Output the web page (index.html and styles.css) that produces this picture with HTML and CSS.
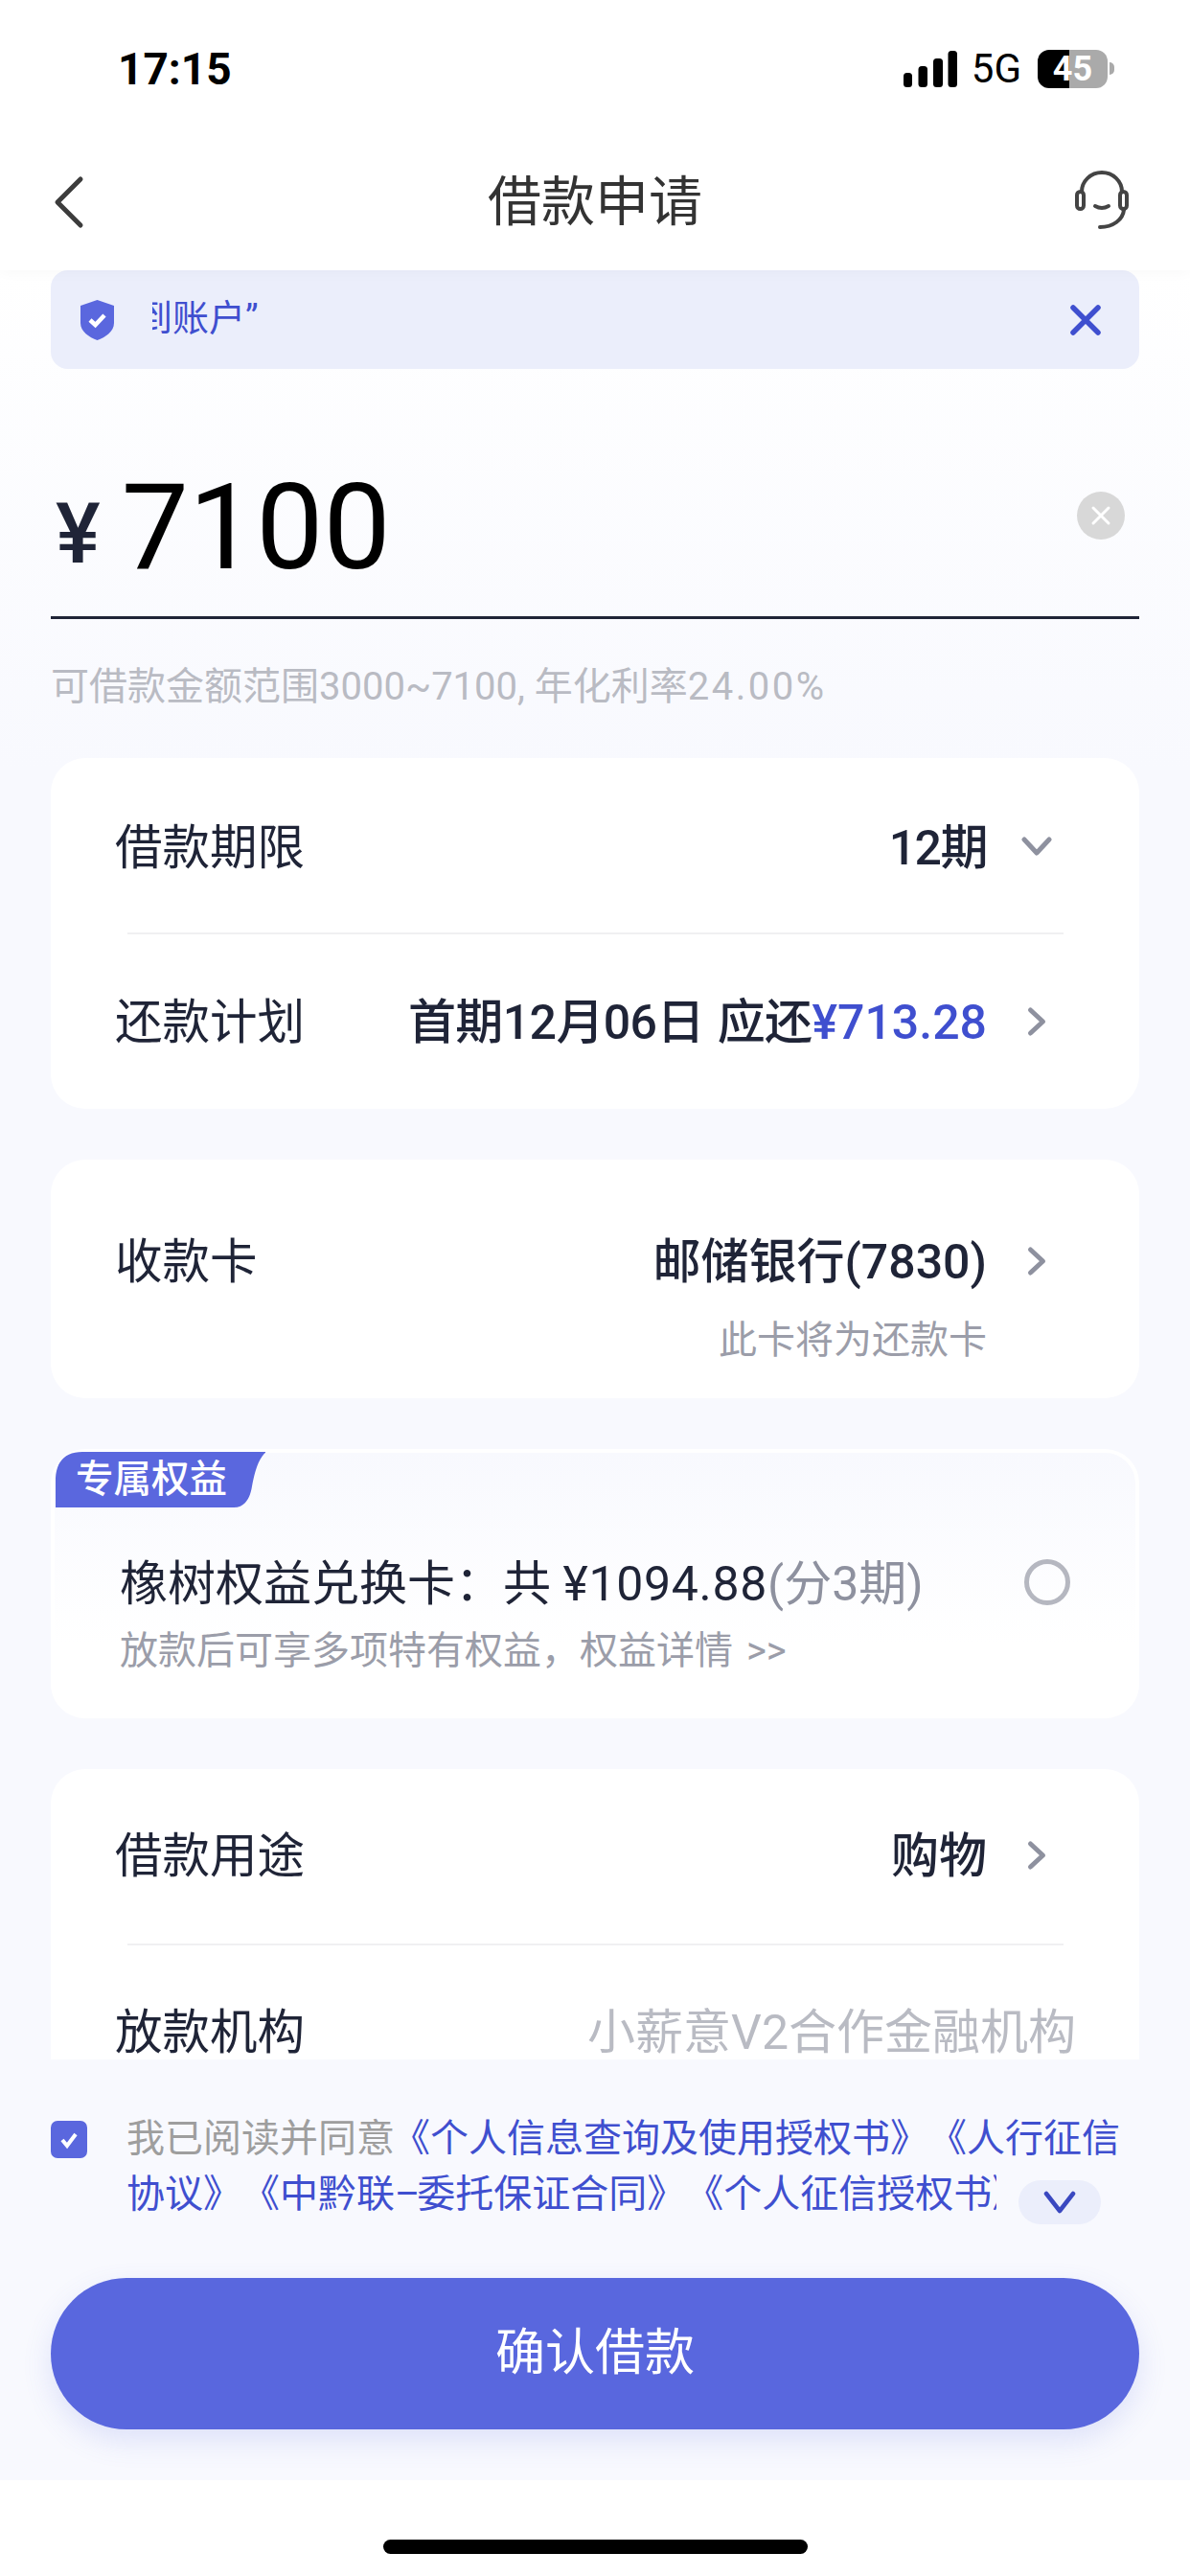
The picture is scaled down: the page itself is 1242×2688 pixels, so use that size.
FILE: index.html
```html
<!DOCTYPE html>
<html lang="zh-CN">
<head>
<meta charset="utf-8">
<title>借款申请</title>
<link rel="stylesheet" href="styles.css">
</head>
<body>
<div class="page">
  <header class="top">
    <div class="status">
      <span class="time">17:15</span>
      <div class="status-right">
        <svg class="signal" width="56" height="38" viewBox="0 0 56 38"><rect x="0" y="23" width="9" height="15" rx="3.5"/><rect x="15.500" y="16" width="9.500" height="22" rx="3.500"/><rect x="31" y="8" width="10" height="30" rx="3.500"/><rect x="46.500" y="0" width="9.500" height="38" rx="3.500"/></svg>
        <span class="net">5G</span>
        <span class="battery">45</span>
        <span class="nub"></span>
      </div>
    </div>
    <nav class="nav">
      <div class="nav-side nav-side-left">
        <svg width="34" height="56" viewBox="0 0 34 56"><path d="M30 4 L6 28 L30 52" fill="none" stroke="#3c3c3c" stroke-width="5" stroke-linecap="round" stroke-linejoin="round"/></svg>
      </div>
      <h1 class="title">借款申请</h1>
      <div class="nav-side nav-side-right">
        <svg width="60" height="64" viewBox="0 0 60 64" fill="none" stroke="#444" stroke-width="4" stroke-linecap="round"><path d="M9 23 A21 20 0 0 1 51 23"/><rect x="4" y="23" width="7" height="18" rx="3.500"/><rect x="49" y="23" width="7" height="18" rx="3.500"/><path d="M23 38 Q30 42 37 38"/><path d="M53 42 C52 52 42 60 28 60"/></svg>
      </div>
    </nav>
  </header>

  <main class="body">
    <div class="scroll">
      <div class="notice">
        <svg class="shield" width="35" height="42" viewBox="0 0 35 42"><path d="M17.500 0 L35 6 V24 C35 33 26 39 17.500 42 C9 39 0 33 0 24 V6 Z" fill="#5a67de"/><path d="M10 21 L15.500 26 L25 16" fill="none" stroke="#fff" stroke-width="4.500"/></svg>
        <div class="notice-clip"><span class="notice-text">到账户”</span></div>
        <svg class="notice-close" width="32" height="32" viewBox="0 0 32 32"><path d="M3 3 L29 29 M29 3 L3 29" stroke="#3f4fcf" stroke-width="5.500" stroke-linecap="round"/></svg>
      </div>

      <div class="amount">
        <span class="currency">¥</span>
        <span class="figure">7100</span>
        <svg class="clear" width="50" height="50" viewBox="0 0 50 50"><circle cx="25" cy="25" r="25" fill="#d8d8d8"/><path d="M17 17 L33 33 M33 17 L17 33" stroke="#fff" stroke-width="3" stroke-linecap="round"/></svg>
      </div>
      <p class="hint">可借款金额范围3000~7100, 年化利率<span class="hint-rate">24.00%</span></p>

      <section class="card">
        <div class="row row-first">
          <span class="label">借款期限</span>
          <span class="value value-tight">12期</span>
          <span class="slot"><svg width="32" height="32" viewBox="0 0 32 32"><path d="M3 9 L16 23 L29 9" class="chev"/></svg></span>
        </div>
        <div class="rule"></div>
        <div class="row row-second">
          <span class="label">还款计划</span>
          <span class="value"><span class="value-tight-soft">首期12月06日 应还</span><em class="money">¥713.28</em></span>
          <span class="slot"><svg width="32" height="32" viewBox="0 0 32 32"><path d="M9.500 4 L22.500 16 L9.500 28" class="chev"/></svg></span>
        </div>
      </section>

      <section class="card card-payee">
        <div class="row row-short">
          <span class="label">收款卡</span>
          <span class="value">邮储银行(7830)</span>
          <span class="slot"><svg width="32" height="32" viewBox="0 0 32 32"><path d="M9.500 4 L22.500 16 L9.500 28" class="chev"/></svg></span>
        </div>
        <p class="note">此卡将为还款卡</p>
      </section>

      <section class="card card-perk">
        <span class="tag">专属权益</span>
        <div class="perk">
          <div class="perk-text">
            <p class="perk-main">橡树权益兑换卡：共 <span class="perk-amount">¥1094.88</span><span class="perk-term">(分3期)</span></p>
            <p class="perk-sub">放款后可享多项特有权益，权益详情 &gt;&gt;</p>
          </div>
          <span class="radio"></span>
        </div>
      </section>

      <section class="card">
        <div class="row">
          <span class="label">借款用途</span>
          <span class="value">购物</span>
          <span class="slot"><svg width="32" height="32" viewBox="0 0 32 32"><path d="M9.500 4 L22.500 16 L9.500 28" class="chev"/></svg></span>
        </div>
        <div class="rule"></div>
        <div class="row row-plain">
          <span class="label">放款机构</span>
          <span class="value-muted">小薪意V2合作金融机构</span>
        </div>
      </section>
    </div>

    <div class="footer">
      <div class="agree">
        <span class="check"><svg width="24" height="24" viewBox="0 0 24 24"><path d="M5 12 L10 18 L19 6" fill="none" stroke="#fff" stroke-width="4"/></svg></span>
        <div class="agree-text">
          <div class="agree-line"><span class="muted">我已阅读并同意</span><span class="link link-lead">《个人信息查询及使用授权书》《人行征信</span></div>
          <div class="agree-line">
            <span class="link agree-clip">协议》《中黔联<span class="dash">–</span>委托保证合同》《个人征信授权书》</span>
            <span class="more"><svg width="34" height="26" viewBox="0 0 34 26"><path d="M3 4 L17 22 L31 4" fill="none" stroke="#3a48c0" stroke-width="4.500" stroke-linecap="round" stroke-linejoin="round"/></svg></span>
          </div>
        </div>
      </div>
      <button class="submit">确认借款</button>
    </div>
  </main>

  <div class="home"><span class="home-bar"></span></div>
</div>
</body>
</html>
```

FILE: styles.css
```css
* { box-sizing: border-box; }
html, body { margin: 0; padding: 0; background: #fff; }
body { font-family: Roboto, "Noto Sans CJK SC", sans-serif; color: #1f2437; text-spacing-trim: space-all; }
p, h1 { margin: 0; font-weight: 400; }
em { font-style: normal; }

.page { width: 1242px; height: 2688px; display: flex; flex-direction: column; overflow: hidden; }

.top { position: relative; z-index: 2; background: #fff; box-shadow: 0 2px 14px rgba(0, 0, 0, .03); }
.status { height: 140px; display: flex; align-items: center; justify-content: space-between; padding: 3px 79px 0 123px; }
.time { font-size: 46px; font-weight: 700; color: #000; line-height: 1; }
.status-right { display: flex; align-items: center; }
.signal { fill: #000; margin-right: 15px; }
.net { font-size: 42px; line-height: 1; color: #000; margin-right: 17px; }
.battery { width: 73px; height: 40px; border-radius: 12px; background: linear-gradient(90deg, #000 45%, #aaa 45%); color: #fff; font-size: 36px; font-weight: 700; line-height: 40px; text-align: center; }
.nub { width: 5px; height: 13px; margin-left: 2px; border-radius: 0 6px 6px 0; background: #aaa; }

.nav { height: 142px; padding: 0 62px 0 54px; display: flex; align-items: center; justify-content: space-between; }
.nav-side { display: flex; }
.nav-side-left { width: 68px; }
.nav-side-right { width: 60px; justify-content: flex-end; margin-top: -5px; }
.title { font-size: 56px; line-height: 64px; color: #333; }

.body { flex: 1; min-height: 0; display: flex; flex-direction: column; background: linear-gradient(#fff, #f8f9fe 520px); }
.scroll { height: 1867px; padding: 0 53px; overflow: hidden; }

.notice { height: 103px; border-radius: 18px; background: #ebeefb; display: flex; align-items: center; padding: 0 40px 0 31px; }
.shield { flex: none; }
.notice-clip { flex: 1; margin: -3px 0 0 40px; overflow: hidden; }
.notice-text { display: block; margin-left: -17px; font-size: 38px; line-height: 44px; color: #3f4fcf; white-space: nowrap; }
.notice-close { flex: none; }

.amount { height: 261px; padding-top: 88px; display: flex; align-items: flex-start; border-bottom: 3px solid #1f2437; }
.currency { font-size: 88px; line-height: 100px; margin: 34px 0 0 5px; font-weight: 500; }
.figure { font-size: 125px; line-height: 150px; color: #000; margin: 3px 0 0 22px; }
.clear { margin: 40px 15px 0 auto; }

.hint { font-size: 40px; line-height: 44px; color: #b9bbc3; padding-top: 49px; margin-bottom: 52px; white-space: nowrap; }
.hint-rate { letter-spacing: 2.500px; }

.card { position: relative; background: #fff; border-radius: 36px; margin-bottom: 53px; }
.row { height: 182px; padding: 0 91px 0 67px; display: flex; align-items: center; }
.row-first { padding-top: 5px; }
.row-second { padding-top: 2px; }
.label { font-size: 49.500px; line-height: 60px; }
.value { margin-left: auto; font-size: 50px; line-height: 60px; font-weight: 500; white-space: nowrap; }
.value-tight { letter-spacing: -1.500px; }
.value-tight-soft { letter-spacing: -.6px; word-spacing: 2px; }
.money { color: #3f4fcf; }
.slot { width: 68px; display: flex; justify-content: flex-end; margin-top: -3px; }
.chev { fill: none; stroke: #8e919f; stroke-width: 5; stroke-linecap: round; stroke-linejoin: round; }
.rule { height: 2px; margin: 0 79px 0 80px; background: #f0f0f2; }

.card-payee { height: 249px; padding-top: 43px; }
.row-short { height: 128px; }
.note { padding-right: 159px; text-align: right; font-size: 40px; line-height: 44px; color: #9b9da9; margin-top: -4px; }

.card-perk { height: 281px; border: 4px solid #fff; background: linear-gradient(#f8f9fe, #fff 200px); }
.tag { position: absolute; left: 1px; top: -1px; width: 219px; height: 58px; padding-left: 21px; background: #5a67de; color: #fff; font-size: 39.500px; font-weight: 500; line-height: 58px; clip-path: path('M0 58 L0 30 C0 10 10 0 28 0 L220 0 C212 6 208 20 205 36 C203 48 198 58 186 58 Z'); }
.perk { height: 100%; padding: 107px 68px 0 68px; display: flex; justify-content: space-between; align-items: flex-start; }
.perk-main { font-size: 50px; line-height: 60px; white-space: nowrap; }
.perk-amount { letter-spacing: .7px; }
.perk-term { color: #8e919f; }
.perk-sub { margin-top: 17px; font-size: 40px; line-height: 46px; color: #9b9da9; white-space: nowrap; word-spacing: 4px; }
.radio { width: 48px; height: 48px; margin-top: 4px; border: 5px solid #b5b7c0; border-radius: 50%; }

.row-plain { padding-right: 66px; }
.value-muted { margin-left: auto; font-size: 50px; line-height: 60px; color: #b9bbc3; white-space: nowrap; }

.footer { flex: 1; padding: 54px 53px 53px; }
.agree { display: flex; align-items: flex-start; }
.check { flex: none; width: 38px; height: 39px; margin: 10px 41px 0 0; border-radius: 7px; background: #5a67de; display: flex; align-items: center; justify-content: center; }
.agree-text { flex: 1; min-width: 0; }
.agree-line { display: flex; height: 58px; font-size: 40px; line-height: 58px; white-space: nowrap; }
.muted { color: #9e9e9e; }
.link { color: #3f4fcf; }
.link-lead { margin-left: -3px; }
.dash { letter-spacing: -3px; }
.agree-clip { width: 908px; overflow: hidden; }
.more { width: 86px; height: 46px; margin: 14px 0 0 23px; border-radius: 23px; background: #ebeefb; display: flex; align-items: center; justify-content: center; }

.submit { display: block; width: 100%; height: 158px; margin-top: 58px; padding: 0; border: 0; border-radius: 79px; background: #5967de; color: #fff; font: 400 52px/60px Roboto, "Noto Sans CJK SC", sans-serif; box-shadow: 0 12px 30px rgba(90, 103, 222, .16); }

.home { height: 100px; background: #fff; display: flex; justify-content: center; padding-top: 62px; }
.home-bar { width: 443px; height: 15px; border-radius: 8px; background: #000; }
```
